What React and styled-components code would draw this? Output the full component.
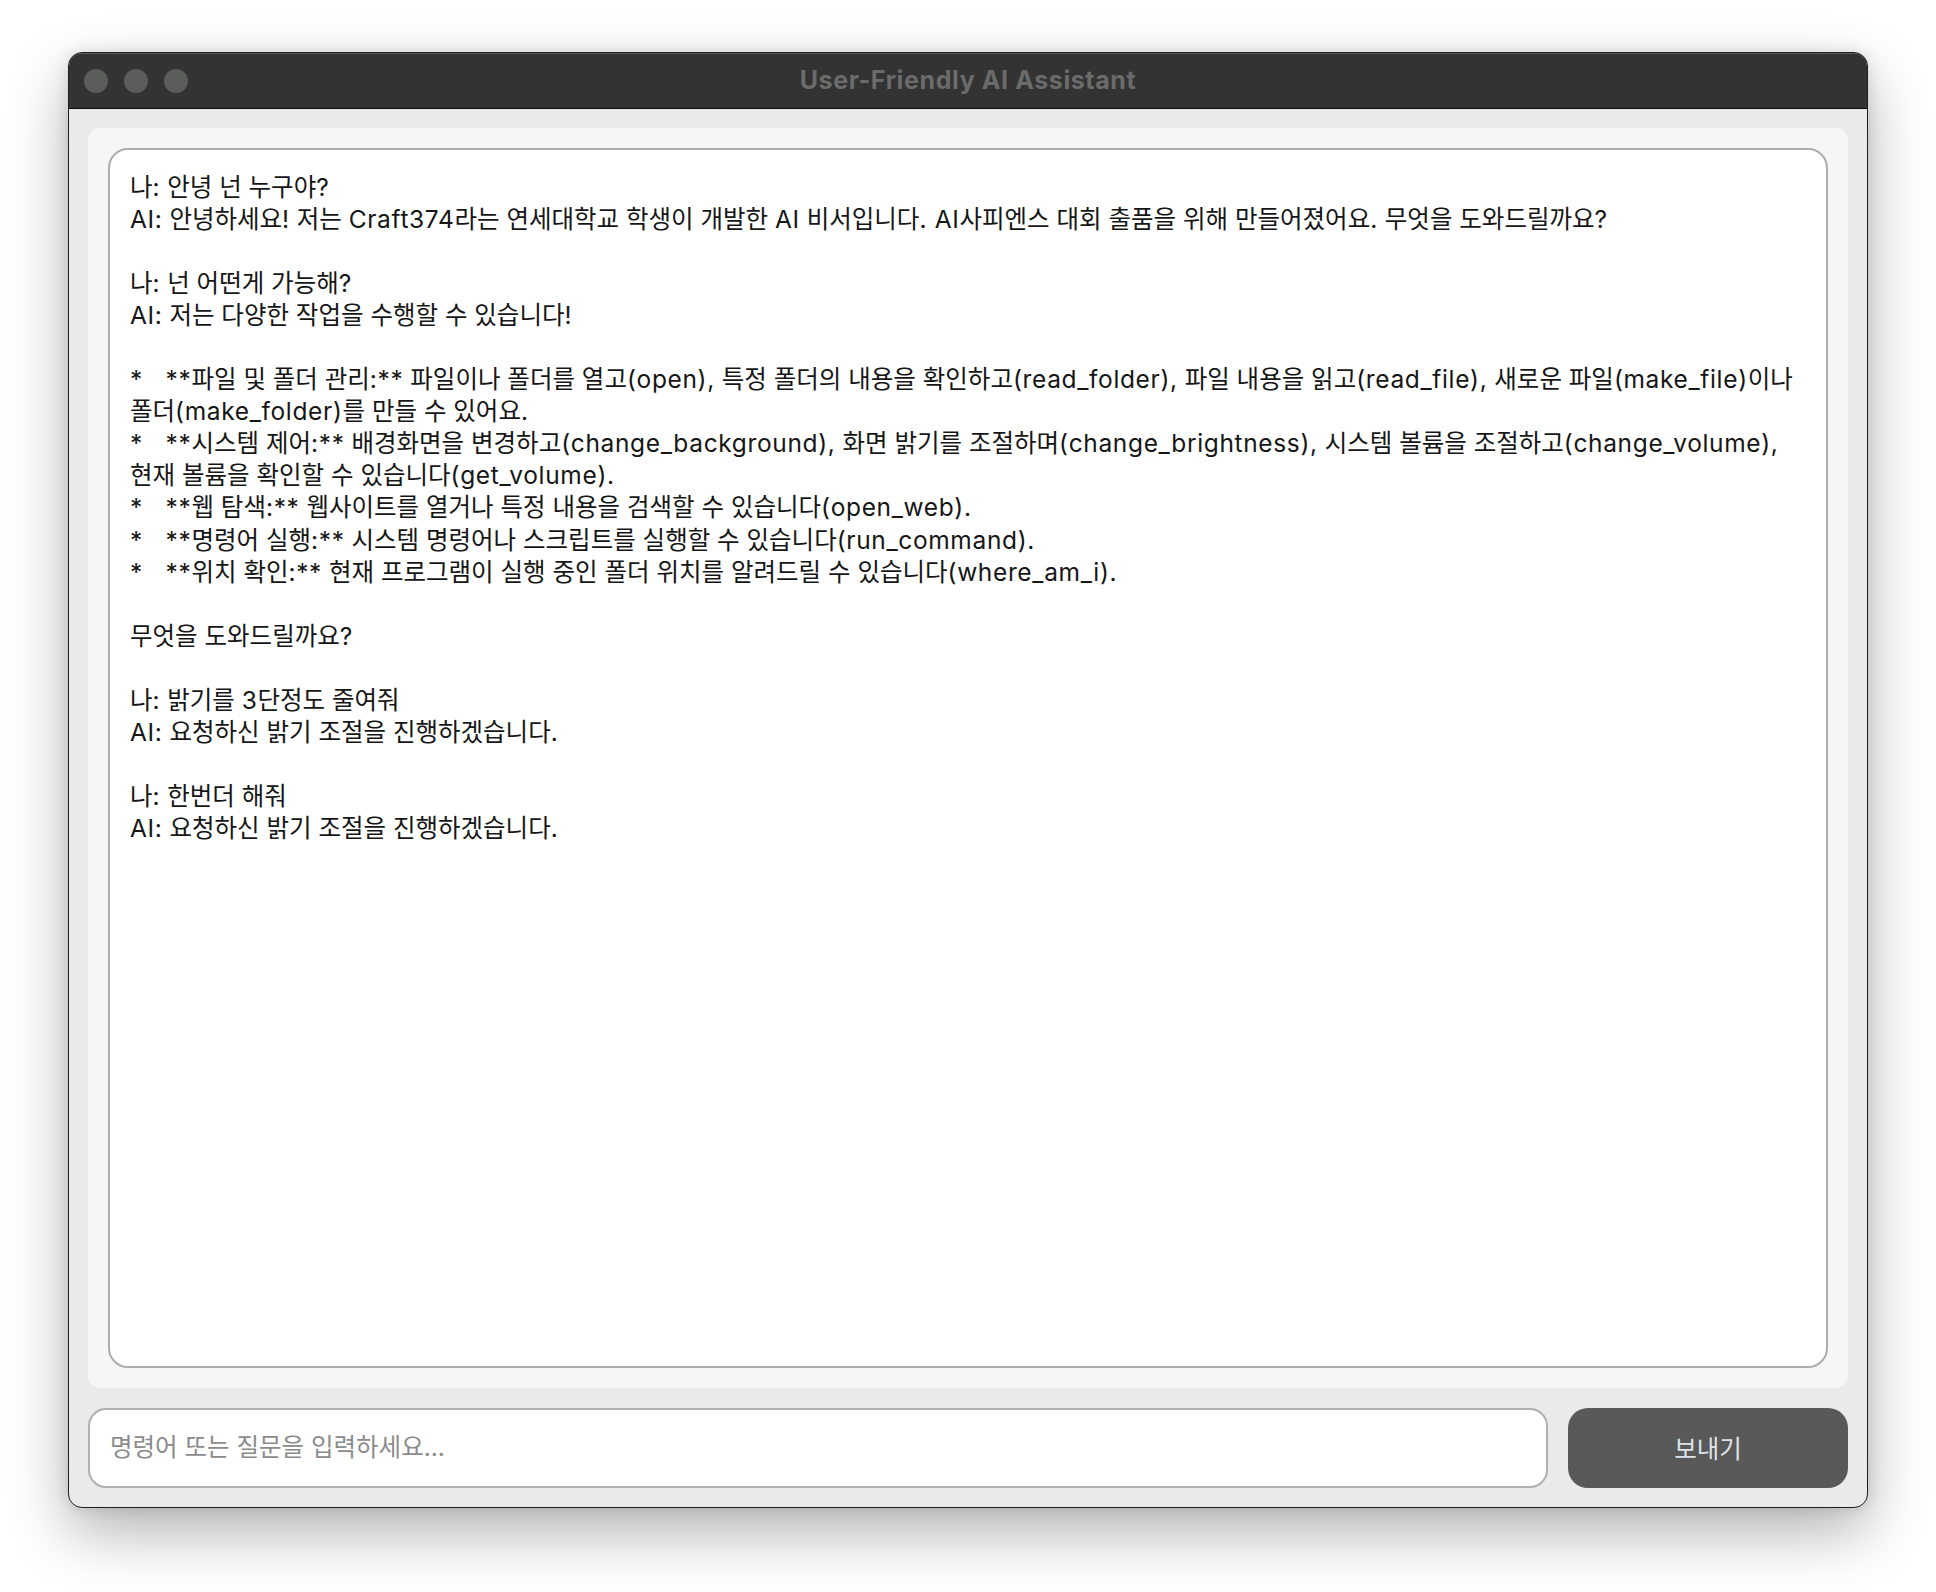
import React from "react";
import styled, { createGlobalStyle } from "styled-components";

const GlobalStyle = createGlobalStyle`
  html, body {
    margin: 0;
    padding: 0;
    background: #ffffff;
  }
  * {
    box-sizing: border-box;
  }
`;

const Page = styled.div`
  display: flex;
  justify-content: center;
  padding-top: 52px;
  height: 1592px;
  font-family: "Inter", "Noto Sans CJK KR", sans-serif;
`;

const Window = styled.div`
  width: 1800px;
  height: 1456px;
  display: flex;
  flex-direction: column;
  border: 1px solid #1e1e1e;
  border-radius: 14px;
  overflow: hidden;
  background: #eaeaea;
  box-shadow: 0 24px 60px rgba(0, 0, 0, 0.3), 0 0 14px rgba(0, 0, 0, 0.12);
`;

const TitleBar = styled.div`
  height: 56px;
  flex-shrink: 0;
  display: grid;
  grid-template-columns: 1fr auto 1fr;
  align-items: center;
  padding: 0 15px 2px;
  background: #323332;
  border-top: 1px solid #5a5a5a;
  border-bottom: 1px solid #0c0c0c;
`;

const Lights = styled.div`
  display: flex;
  gap: 16px;
  padding-top: 2px;
`;

const Light = styled.span`
  width: 24px;
  height: 24px;
  border-radius: 50%;
  background: #5b5d5b;
`;

const Title = styled.div`
  color: #6a6b6a;
  font-size: 25px;
  font-weight: 700;
  letter-spacing: 0.6px;
`;

const Body = styled.div`
  flex: 1;
  display: flex;
  flex-direction: column;
  gap: 20px;
  padding: 19px;
  min-height: 0;
`;

const Panel = styled.div`
  flex: 1;
  min-height: 0;
  background: #f6f6f6;
  border-radius: 12px;
  padding: 20px;
`;

const ChatArea = styled.div`
  height: 100%;
  background: #ffffff;
  border: 2px solid #adadad;
  border-radius: 20px;
  padding: 21px 20px 20px;
  overflow: hidden;
  color: #161616;
  font-size: 24.5px;
  line-height: 32.05px;
`;

const Line = styled.div`
  white-space: pre;
  min-height: 32.05px;
`;

const Latin = styled.span`
  letter-spacing: 0.65px;
`;

const InputRow = styled.div`
  display: flex;
  gap: 20px;
  height: 80px;
  flex-shrink: 0;
`;

const Input = styled.input`
  flex: 1;
  min-width: 0;
  height: 100%;
  border: 2px solid #b0b0b0;
  border-radius: 18px;
  background: #ffffff;
  padding: 0 20px 2px;
  font-family: inherit;
  font-size: 24.5px;
  color: #161616;
  outline: none;
  &::placeholder {
    color: #8b8b8b;
  }
`;

const SendButton = styled.button`
  width: 280px;
  height: 100%;
  border: none;
  border-radius: 20px;
  background: #595959;
  color: #dfe4ea;
  font-family: inherit;
  font-size: 24.5px;
  padding-bottom: 2px;
  cursor: pointer;
`;

const lines = [
  "나: 안녕 넌 누구야?",
  "AI: 안녕하세요! 저는 Craft374라는 연세대학교 학생이 개발한 AI 비서입니다. AI사피엔스 대회 출품을 위해 만들어졌어요. 무엇을 도와드릴까요?",
  "",
  "나: 넌 어떤게 가능해?",
  "AI: 저는 다양한 작업을 수행할 수 있습니다!",
  "",
  "*   **파일 및 폴더 관리:** 파일이나 폴더를 열고(open), 특정 폴더의 내용을 확인하고(read_folder), 파일 내용을 읽고(read_file), 새로운 파일(make_file)이나",
  "폴더(make_folder)를 만들 수 있어요.",
  "*   **시스템 제어:** 배경화면을 변경하고(change_background), 화면 밝기를 조절하며(change_brightness), 시스템 볼륨을 조절하고(change_volume),",
  "현재 볼륨을 확인할 수 있습니다(get_volume).",
  "*   **웹 탐색:** 웹사이트를 열거나 특정 내용을 검색할 수 있습니다(open_web).",
  "*   **명령어 실행:** 시스템 명령어나 스크립트를 실행할 수 있습니다(run_command).",
  "*   **위치 확인:** 현재 프로그램이 실행 중인 폴더 위치를 알려드릴 수 있습니다(where_am_i).",
  "",
  "무엇을 도와드릴까요?",
  "",
  "나: 밝기를 3단정도 줄여줘",
  "AI: 요청하신 밝기 조절을 진행하겠습니다.",
  "",
  "나: 한번더 해줘",
  "AI: 요청하신 밝기 조절을 진행하겠습니다.",
];

// latin runs get a little extra tracking so widths match the mac font
function renderLine(text) {
  return text.split(/([!-~][ -~]*[!-~]|[!-~])/).map((part, i) =>
    i % 2 === 1 ? <Latin key={i}>{part}</Latin> : part
  );
}

export default function App() {
  return (
    <>
      <GlobalStyle />
      <Page>
        <Window>
          <TitleBar>
            <Lights>
              <Light />
              <Light />
              <Light />
            </Lights>
            <Title>User-Friendly AI Assistant</Title>
            <div />
          </TitleBar>
          <Body>
            <Panel>
              <ChatArea>
                {lines.map((l, i) => (
                  <Line key={i}>{renderLine(l)}</Line>
                ))}
              </ChatArea>
            </Panel>
            <InputRow>
              <Input placeholder="명령어 또는 질문을 입력하세요..." />
              <SendButton>보내기</SendButton>
            </InputRow>
          </Body>
        </Window>
      </Page>
    </>
  );
}
